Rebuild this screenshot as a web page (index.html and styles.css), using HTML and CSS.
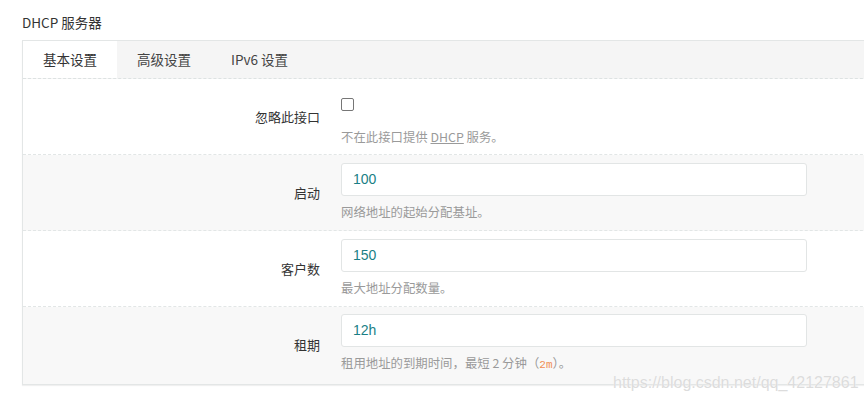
FILE: index.html
```html
<!DOCTYPE html>
<html lang="zh">
<head>
<meta charset="utf-8">
<link rel="stylesheet" href="styles.css">
</head>
<body>
<div class="page">
  <h3 class="title">DHCP 服务器</h3>
  <div class="panel">
    <ul class="tabs">
      <li class="tab active">基本设置</li>
      <li class="tab">高级设置</li>
      <li class="tab">IPv6 设置</li>
    </ul>
    <div class="row">
      <label class="label">忽略此接口</label>
      <div class="field">
        <div class="checkwrap"><span class="check"></span></div>
        <div class="help">不在此接口提供 <abbr>DHCP</abbr> 服务。</div>
      </div>
    </div>
    <div class="row alt">
      <label class="label">启动</label>
      <div class="field">
        <div class="input">100</div>
        <div class="help">网络地址的起始分配基址。</div>
      </div>
    </div>
    <div class="row">
      <label class="label">客户数</label>
      <div class="field">
        <div class="input">150</div>
        <div class="help">最大地址分配数量。</div>
      </div>
    </div>
    <div class="row alt last">
      <label class="label">租期</label>
      <div class="field">
        <div class="input">12h</div>
        <div class="help">租用地址的到期时间，最短 2 分钟（<code>2m</code>）。</div>
      </div>
    </div>
  </div>
  <span class="watermark">https://blog.csdn.net/qq_42127861</span>
</div>
</body>
</html>
```
FILE: styles.css
```css
html, body {
  margin: 0;
  padding: 0;
  background: #fff;
  overflow: hidden;
}
.page {
  position: relative;
  width: 864px;
  height: 401px;
  padding: 12px 0 0 22px;
  box-sizing: border-box;
  font-family: "Noto Sans CJK SC", "Noto Sans", sans-serif;
  font-size: 13px;
  color: #333;
}
.title {
  margin: 0 0 7px 0;
  font-size: 13.5px;
  font-weight: normal;
  line-height: 21px;
  color: #333;
}
.panel {
  width: 900px;
  border: 1px solid #e3e6e6;
  border-right: none;
  box-shadow: 0 1px 1px rgba(0,0,0,0.06);
}
.tabs {
  display: flex;
  margin: 0;
  padding: 0;
  list-style: none;
  background: #f5f5f5;
  height: 37px;
  border-bottom: 1px dashed #dde2e2;
}
.tab {
  padding: 0 20px;
  line-height: 37px;
  font-size: 13.5px;
  color: #444;
}
.tab.active {
  background: #fff;
  color: #333;
}
.row {
  display: flex;
  align-items: center;
  padding: 7px 0;
  min-height: 61px;
  background: #fff;
  border-bottom: 1px dashed #e2e6e6;
}
.row.alt {
  background: #f8f8f8;
}
.row.last {
  border-bottom: none;
  padding-bottom: 9px;
}
.label {
  width: 297px;
  text-align: right;
  padding-right: 21px;
  flex: none;
  color: #333;
}
.field {
  display: flex;
  flex-direction: column;
}
.checkwrap {
  height: 34px;
  display: flex;
  align-items: flex-start;
  padding-top: 11px;
  box-sizing: border-box;
}
.check {
  display: block;
  width: 11px;
  height: 11px;
  border: 1px solid #767676;
  border-radius: 2px;
  background: #fff;
}
.input {
  width: 466px;
  height: 33px;
  box-sizing: border-box;
  border: 1px solid #e2e5e5;
  border-radius: 3px;
  background: #fff;
  padding: 0 11px;
  line-height: 31px;
  font-family: "Liberation Sans", Arial, sans-serif;
  font-size: 14px;
  color: #1a7f86;
}
.help {
  margin-top: 6px;
  line-height: 20px;
  font-size: 12.4px;
  color: #9a9a9a;
}
.help abbr {
  text-decoration: underline;
  text-decoration-color: #9a9a9a;
  color: #9a9a9a;
}
.help code {
  font-family: "Liberation Mono", monospace;
  font-size: 11px;
  color: #f08d55;
}
.watermark {
  position: absolute;
  left: 613px;
  top: 374px;
  font-family: "Liberation Sans", Arial, sans-serif;
  font-size: 16px;
  color: #dcdcdc;
  text-shadow: 0 0 1px #fff;
}
```
